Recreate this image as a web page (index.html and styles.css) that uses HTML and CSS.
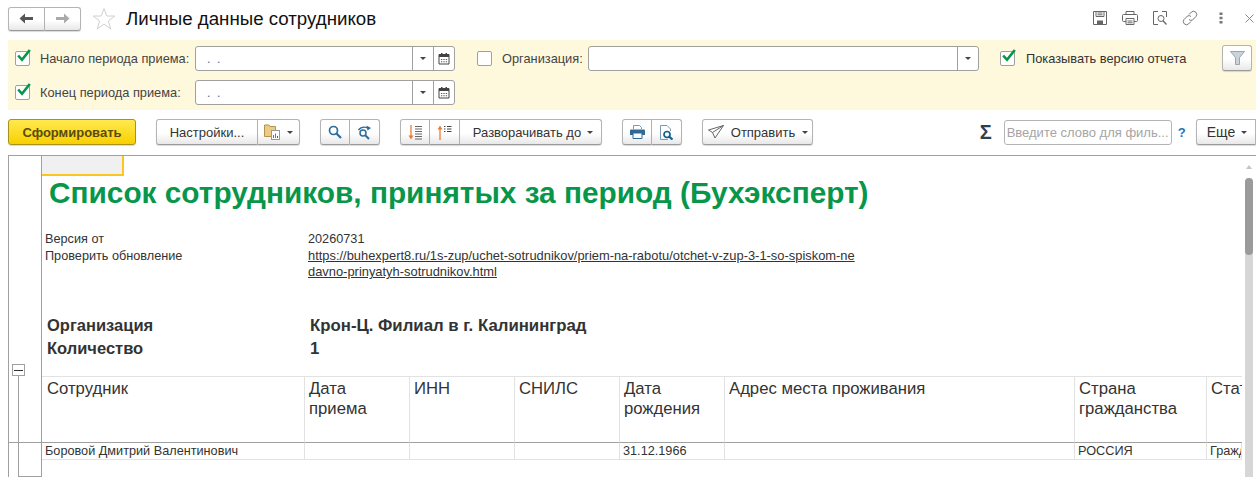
FILE: index.html
```html
<!DOCTYPE html>
<html lang="ru">
<head>
    <meta charset="UTF-8">
    <title>Личные данные сотрудников</title>
    <link rel="stylesheet" href="styles.css">
</head>
<body>
    <header class="top">
        <div class="group nav">
            <button class="btn nav-btn"><svg width="15" height="11" viewBox="0 0 15 11"><path d="M6 0.500V4H14V7H6V10.500L0.500 5.500Z" fill="#555"/></svg></button>
            <button class="btn nav-btn nav-next"><svg width="15" height="11" viewBox="0 0 15 11"><path d="M9 0.500V4H1V7H9V10.500L14.500 5.500Z" fill="#aaa"/></svg></button>
        </div>
        <svg class="star" width="24" height="24" viewBox="0 0 24 24"><path d="M12 1.500L14.800 9H22.800L16.400 14L18.800 22L12 17.200L5.200 22L7.600 14L1.200 9H9.200Z" fill="none" stroke="#d0d0d0"/></svg>
        <h1 class="title">Личные данные сотрудников</h1>
        <div class="top-icons">
            <svg width="16" height="16" viewBox="0 0 16 16"><path d="M1.500 1.500H14.500V14.500H1.500Z M4 1.500V6.500H12V1.500 M5.500 3H10.500 M5.500 4.800H10.500" fill="none" stroke="#666"/><rect x="5" y="10.500" width="6" height="4" fill="#666"/></svg>
            <svg width="16" height="16" viewBox="0 0 16 16"><path d="M4 4.500V1.500H12V4.500 M4 11.500H1.500Q0.500 11.500 0.500 10.500V5.500Q0.500 4.500 1.500 4.500H14.500Q15.500 4.500 15.500 5.500V10.500Q15.500 11.500 14.500 11.500H12 M4 8.500H12V14.500H4Z M5.500 11H10.500 M5.500 12.800H10.500" fill="none" stroke="#666"/></svg>
            <svg width="16" height="16" viewBox="0 0 16 16"><path d="M6 1.500H1.500V14.500H6 M10 1.500H14.500V7" fill="none" stroke="#666"/><circle cx="9" cy="8.500" r="3" fill="none" stroke="#666"/><path d="M11 10.800L14.500 14.500" stroke="#666" stroke-width="1.300"/></svg>
            <svg width="16" height="16" viewBox="0 0 16 16"><path d="M7 4.500L9.500 2Q11.500 0.300 13.800 2.200Q15.700 4.500 14 6.500L10.500 10Q8.500 11 7 9.500 M9 11.500L6.500 14Q4.500 15.700 2.200 13.800Q0.300 11.500 2 9.500L5.500 6Q7.500 5 9 6.500" fill="none" stroke="#777"/></svg>
            <svg class="dots" width="4" height="12" viewBox="0 0 4 12"><path d="M0.500 0.500H3.500V3H0.500Z M0.500 4.700H3.500V7.200H0.500Z M0.500 9H3.500V11.500H0.500Z" fill="#777"/></svg>
            <svg class="close" width="9" height="9" viewBox="0 0 9 9"><path d="M0.500 0.500L8.500 8.500M8.500 0.500L0.500 8.500" stroke="#888"/></svg>
        </div>
    </header>

    <section class="filters">
        <div class="filter-col">
            <div class="filter-row">
                <span class="check"><svg width="14" height="13" viewBox="0 0 14 13"><path d="M1.200 6.500L5 10.800L12.800 1" fill="none" stroke="#079549" stroke-width="2.600"/></svg></span>
                <label class="lbl lbl-start">Начало периода приема:</label>
                <div class="field date-field"><span class="date-mask">.&nbsp;&nbsp;.</span><span class="cell cell-drop"><i class="caret"></i></span><span class="cell cell-cal"><svg width="12" height="13" viewBox="0 0 12 13"><path d="M1 2.500H11V12H1Z" fill="none" stroke="#444"/><path d="M1 2.500H11V5H1Z M3 1H4.500V3H3Z M7.500 1H9V3H7.500Z" fill="#444"/><path d="M3 7H4.300V8H3Z M5.400 7H6.700V8H5.400Z M7.800 7H9.100V8H7.800Z M3 9.300H4.300V10.300H3Z M5.400 9.300H6.700V10.300H5.400Z M7.800 9.300H9.100V10.300H7.800Z" fill="#555"/></svg></span></div>
            </div>
            <div class="filter-row">
                <span class="check"><svg width="14" height="13" viewBox="0 0 14 13"><path d="M1.200 6.500L5 10.800L12.800 1" fill="none" stroke="#079549" stroke-width="2.600"/></svg></span>
                <label class="lbl lbl-start">Конец периода приема:</label>
                <div class="field date-field"><span class="date-mask">.&nbsp;&nbsp;.</span><span class="cell cell-drop"><i class="caret"></i></span><span class="cell cell-cal"><svg width="12" height="13" viewBox="0 0 12 13"><path d="M1 2.500H11V12H1Z" fill="none" stroke="#444"/><path d="M1 2.500H11V5H1Z M3 1H4.500V3H3Z M7.500 1H9V3H7.500Z" fill="#444"/><path d="M3 7H4.300V8H3Z M5.400 7H6.700V8H5.400Z M7.800 7H9.100V8H7.800Z M3 9.300H4.300V10.300H3Z M5.400 9.300H6.700V10.300H5.400Z M7.800 9.300H9.100V10.300H7.800Z" fill="#555"/></svg></span></div>
            </div>
        </div>
        <div class="filter-row org">
            <span class="check"></span>
            <label class="lbl lbl-org">Организация:</label>
            <div class="field org-field"><span class="cell cell-drop"><i class="caret"></i></span></div>
        </div>
        <div class="filter-row version">
            <span class="check"><svg width="14" height="13" viewBox="0 0 14 13"><path d="M1.200 6.500L5 10.800L12.800 1" fill="none" stroke="#079549" stroke-width="2.600"/></svg></span>
            <label class="lbl lbl-version">Показывать версию отчета</label>
        </div>
        <button class="btn filter-btn"><svg width="15" height="14" viewBox="0 0 15 14"><path d="M0.500 0.500H14.500L9.500 6.500V13.500H5.500V6.500Z" fill="#c9d3da" stroke="#9aa5ad"/></svg></button>
    </section>

    <nav class="toolbar">
        <button class="btn btn-main">Сформировать</button>
        <div class="group settings">
            <button class="btn btn-settings">Настройки...</button>
            <button class="btn btn-variants"><svg width="16" height="16" viewBox="0 0 16 16"><path d="M0.500 1H5L6 2.500H11.500V12.500H0.500Z" fill="#eccb85" stroke="#b3914f"/><rect x="7.500" y="6.500" width="8" height="9" fill="#fff" stroke="#999"/><path d="M9 11H10V14H9Z" fill="#2b9b4e"/><path d="M11 9.500H12V14H11Z" fill="#d9503f"/><path d="M13 12H14V14H13Z" fill="#2b6c9e"/></svg><i class="caret"></i></button>
        </div>
        <div class="group search">
            <button class="btn btn-icon"><svg width="14" height="14" viewBox="0 0 14 14"><circle cx="5.500" cy="5.500" r="4" fill="none" stroke="#2b6c9e" stroke-width="1.700"/><path d="M8.500 8.500L13 13" stroke="#2b6c9e" stroke-width="2.200"/></svg></button>
            <button class="btn btn-icon"><svg width="15" height="15" viewBox="0 0 15 15"><circle cx="6" cy="8" r="3" fill="none" stroke="#2b6c9e" stroke-width="1.500"/><path d="M8.500 10.500L12 14" stroke="#2b6c9e" stroke-width="2"/><path d="M1.500 5Q5 0.500 11 3" fill="none" stroke="#2b6c9e" stroke-width="1.400"/><path d="M9.500 0.500L14 3L10.500 5.500Z" fill="#2b6c9e"/></svg></button>
        </div>
        <div class="group tree">
            <button class="btn btn-icon"><svg width="15" height="15" viewBox="0 0 15 15"><path d="M3 0V12" stroke="#ef7b30" stroke-width="1.300"/><path d="M0.500 10.500H5.500L3 14.500Z" fill="#ef7b30"/><path d="M7 1.500H14M7 4H14M7 6.500H14M7 9H14M7 11.500H14M7 14H14" stroke="#666"/></svg></button>
            <button class="btn btn-icon"><svg width="15" height="15" viewBox="0 0 15 15"><path d="M3 3V15" stroke="#ef7b30" stroke-width="1.300"/><path d="M0.500 4.500H5.500L3 0.500Z" fill="#ef7b30"/><path d="M7 1.500H8.500M10 1.500H14.500M7 4H8.500M10 4H14.500M7 6.500H8.500M10 6.500H14.500" stroke="#444"/></svg></button>
            <button class="btn btn-expand">Разворачивать до<i class="caret"></i></button>
        </div>
        <div class="group print">
            <button class="btn btn-icon"><svg width="15" height="14" viewBox="0 0 15 14"><path d="M3.500 4V0.500H9.500L11.500 2.500V4" fill="none" stroke="#7a99b3"/><path d="M0 5.500Q0 4.500 1 4.500H14Q15 4.500 15 5.500V10H0Z" fill="#2f6a96"/><path d="M3 8H12V13.500H3Z" fill="#fff" stroke="#2f6a96"/></svg></button>
            <button class="btn btn-icon"><svg width="15" height="15" viewBox="0 0 15 15"><path d="M9 14.500H1.500V0.500H8L11.500 4V6" fill="none" stroke="#7a99b3"/><circle cx="8" cy="9.500" r="3" fill="none" stroke="#0f5f8e" stroke-width="1.700"/><path d="M10 11.500L13.500 14.500" stroke="#0f5f8e" stroke-width="2.200"/></svg></button>
        </div>
        <button class="btn btn-send"><svg width="16" height="14" viewBox="0 0 16 14"><path d="M15.500 0.500L0.500 5L4.500 7.500L7 13Z M15.500 0.500L4.500 7.500" fill="none" stroke="#666"/></svg>Отправить<i class="caret"></i></button>
        <span class="sigma">Σ</span>
        <input class="search-input" placeholder="Введите слово для филь...">
        <span class="help">?</span>
        <button class="btn btn-more">Еще<i class="caret"></i></button>
    </nav>

    <main class="report">
        <div class="gutter">
            <div class="gutter-top">
                <span class="toggle"></span>
                <span class="stem"></span>
            </div>
            <div class="gutter-end"></div>
        </div>
        <div class="sheet">
            <div class="active-cell"></div>
            <h2 class="report-title">Список сотрудников, принятых за период (Бухэксперт)</h2>
            <div class="meta">
                <div class="meta-name">Версия от</div>
                <div class="meta-val">20260731</div>
                <div class="meta-name">Проверить обновление</div>
                <a class="meta-link">https://buhexpert8.ru/1s-zup/uchet-sotrudnikov/priem-na-rabotu/otchet-v-zup-3-1-so-spiskom-ne<br>davno-prinyatyh-sotrudnikov.html</a>
            </div>
            <div class="summary">
                <div class="sum-name">Организация</div>
                <div class="sum-val">Крон-Ц. Филиал в г. Калининград</div>
                <div class="sum-name">Количество</div>
                <div class="sum-val">1</div>
            </div>
            <div class="data">
                <div class="th th-first">Сотрудник</div>
                <div class="th">Дата приема</div>
                <div class="th">ИНН</div>
                <div class="th">СНИЛС</div>
                <div class="th">Дата рождения</div>
                <div class="th">Адрес места проживания</div>
                <div class="th">Страна гражданства</div>
                <div class="th th-cut">Статус</div>
                <div class="td">Боровой Дмитрий Валентинович</div>
                <div class="td"></div>
                <div class="td"></div>
                <div class="td"></div>
                <div class="td">31.12.1966</div>
                <div class="td"></div>
                <div class="td">РОССИЯ</div>
                <div class="td td-cut">Гражданин</div>
            </div>
        </div>
        <div class="scroll">
            <i class="scroll-up"></i>
            <div class="scroll-track"><div class="scroll-thumb"></div></div>
        </div>
    </main>
</body>
</html>
```

FILE: styles.css
```css
* {
    box-sizing: border-box;
}

html, body {
    height: 477px;
    overflow: hidden;
}

body {
    margin: 0;
    background-color: #fff;
    font-family: "Liberation Sans", Arial, sans-serif;
    font-size: 12.700px;
    color: #333;
}

button {
    font-family: inherit;
    font-size: 13px;
    color: #333;
}

/* buttons */
.btn {
    display: inline-flex;
    align-items: center;
    justify-content: center;
    height: 26px;
    padding: 0;
    border: 1px solid #b4b4b4;
    border-bottom-color: #9a9a9a;
    border-radius: 3px;
    background: linear-gradient(#fff 55%, #e8e8e8);
    box-shadow: 0 1px 1px rgba(0, 0, 0, 0.15);
}

.group {
    display: flex;
}

.group .btn {
    border-radius: 0;
    border-left-width: 0;
}

.group .btn:first-child {
    border-left-width: 1px;
    border-radius: 3px 0 0 3px;
}

.group .btn:last-child {
    border-radius: 0 3px 3px 0;
}

.caret {
    display: inline-block;
    width: 0;
    height: 0;
    border-left: 3px solid transparent;
    border-right: 3px solid transparent;
    border-top: 3px solid #444;
}

/* title bar */
.top {
    display: flex;
    align-items: center;
    height: 40px;
    padding: 0 8px;
}

.nav {
    margin-top: -3px;
}

.nav-btn {
    width: 37px;
    height: 24px;
}

.nav-next {
    width: 36px;
}

.star {
    margin: -3px 0 0 11px;
}

.title {
    margin: -2px 0 0 10px;
    font-size: 18.700px;
    font-weight: normal;
    color: #111;
}

.top-icons {
    display: flex;
    align-items: center;
    gap: 14px;
    margin-left: auto;
    margin-top: -4px;
    margin-right: -6px;
}

.dots {
    margin-left: 7px;
}

.close {
    margin-left: 8px;
}

/* filters */
.filters {
    display: flex;
    align-items: flex-start;
    height: 70px;
    margin-left: 8px;
    padding: 6px 4px 0 7px;
    background-color: #fef8dd;
}

.filter-col {
    display: flex;
    flex-direction: column;
    gap: 9px;
}

.filter-row {
    display: flex;
    align-items: center;
    height: 25px;
}

.check {
    display: flex;
    flex: none;
    width: 15px;
    height: 15px;
    border: 1px solid #a0a0a0;
    border-radius: 2px;
    background-color: #fff;
}

.check svg {
    flex: none;
    margin: -3px 0 0 1px;
}

.lbl {
    color: #444;
    font-size: 12.800px;
    white-space: nowrap;
}

.lbl-start {
    width: 155px;
    margin-left: 10px;
}

.field {
    display: flex;
    justify-content: flex-end;
    height: 25px;
    border: 1px solid #a0a0a0;
    border-radius: 3px;
    background-color: #fff;
}

.date-field {
    width: 260px;
}

.date-mask {
    margin-right: auto;
    padding: 5px 0 0 11px;
    color: #3a6ea5;
    font-size: 12px;
}

.cell {
    display: flex;
    align-items: center;
    justify-content: center;
    width: 21px;
    border-left: 1px solid #a0a0a0;
}

.org {
    margin-left: 22px;
}

.lbl-org {
    width: 86px;
    margin-left: 10px;
}

.org-field {
    width: 391px;
}

.version {
    margin-left: 21px;
}

.lbl-version {
    margin-left: 11px;
    color: #333;
}

.filter-btn {
    width: 30px;
    height: 26px;
    margin: -1px 0 0 auto;
}

/* toolbar */
.toolbar {
    display: flex;
    align-items: center;
    height: 26px;
    margin-top: 9px;
    padding-left: 8px;
}

.btn-main {
    width: 128px;
    border-color: #a8921c;
    background: linear-gradient(#ffe94f, #f8d000);
    font-weight: bold;
    font-size: 13px;
    color: #5a4a10;
}

.settings {
    margin-left: 20px;
}

.btn-settings {
    width: 102px;
}

.btn-variants {
    width: 42px;
    gap: 7px;
}

.btn-icon {
    width: 30px;
}

.search {
    margin-left: 20px;
}

.tree {
    margin-left: 20px;
}

.btn-expand {
    width: 142px;
    gap: 6px;
    padding-left: 5px;
}

.print {
    margin-left: 20px;
}

.btn-send {
    width: 111px;
    gap: 7px;
    padding-left: 1px;
    margin-left: 20px;
}

.sigma {
    margin-left: auto;
    color: #2e3f4d;
    font-size: 20px;
    font-weight: bold;
}

.search-input {
    width: 168px;
    height: 25px;
    margin-left: 12px;
    padding: 0 2px;
    border: 1px solid #b4b4b4;
    border-radius: 3px;
    font-family: inherit;
    font-size: 13px;
}

.search-input::placeholder {
    color: #a5a5a5;
}

.help {
    margin: 0 10.400px 0 6px;
    color: #1d76b8;
    font-size: 13px;
    font-weight: bold;
}

.btn-more {
    width: 60px;
    gap: 6px;
    padding-left: 2px;
    border-radius: 3px 0 0 3px;
    font-size: 14px;
}

/* report */
.report {
    display: flex;
    height: 322px;
    margin: 10px 0 0 8px;
    border-top: 1px solid #a0a0a0;
}

.gutter {
    display: flex;
    flex-direction: column;
    flex: none;
    width: 34px;
    border-left: 1px solid #a0a0a0;
    border-right: 1px solid #a0a0a0;
}

.gutter-top {
    display: flex;
    flex-direction: column;
    height: 287px;
    padding: 208px 0 0 3px;
    border-bottom: 1px solid #a0a0a0;
}

.toggle {
    flex: none;
    width: 13px;
    height: 12px;
    border: 1px solid #a0a0a0;
    background: linear-gradient(#333, #333) center / 9px 1px no-repeat;
}

.stem {
    flex: 1;
    margin-left: 6px;
    border-left: 1px solid #a0a0a0;
}

.gutter-end {
    height: 34px;
    margin-left: 9px;
    border-left: 1px solid #a0a0a0;
    border-bottom: 1px solid #a0a0a0;
}

.sheet {
    flex: none;
    width: 1200px;
    overflow: hidden;
}

.active-cell {
    width: 82px;
    height: 20px;
    border-right: 2px solid #fcc520;
    border-bottom: 2px solid #fcc520;
    background-color: #f0f0f0;
}

.report-title {
    margin: -1px 0 0 7px;
    color: #07964a;
    font-size: 29.800px;
    line-height: 36px;
    white-space: nowrap;
}

.meta {
    display: grid;
    grid-template-columns: 266px 1fr;
    margin-top: 20px;
    line-height: 16.500px;
}

.meta-name {
    padding-left: 3px;
}

.meta-link {
    font-size: 12.900px;
    text-decoration: underline;
}

.summary {
    display: grid;
    grid-template-columns: 268px 1fr;
    grid-auto-rows: 23px;
    margin-top: 33px;
    font-size: 16.500px;
    font-weight: bold;
    line-height: 23px;
}

.sum-name {
    padding-left: 5px;
}

.sum-val {
    font-size: 16.800px;
}

.data {
    display: grid;
    grid-template-columns: 263px 105px 105px 105px 105px 350px 132px 35px;
    grid-template-rows: 66px 17px;
    margin-top: 16px;
    border-top: 1px solid #e2e2e2;
}

.th {
    padding: 2px 4px;
    border-right: 1px solid #e2e2e2;
    border-bottom: 1px solid #a0a0a0;
    font-size: 16.700px;
    line-height: 20px;
}

.th-first {
    padding-left: 5px;
}

.th-cut, .td-cut {
    overflow: hidden;
    white-space: nowrap;
    border-right: 0;
}

.th-cut {
    padding-right: 0;
}

.td {
    padding: 0 3px;
    border-right: 1px solid #e2e2e2;
    border-bottom: 1px solid #e2e2e2;
    line-height: 16px;
    white-space: nowrap;
}

.td-cut {
    padding-right: 0;
}

.scroll {
    display: flex;
    flex-direction: column;
    align-items: center;
    flex: none;
    width: 8px;
    margin-left: 3px;
    padding-top: 9px;
}

.scroll-up {
    flex: none;
    width: 0;
    height: 0;
    margin-bottom: 9px;
    border-left: 3px solid transparent;
    border-right: 3px solid transparent;
    border-bottom: 4px solid #c4c4c4;
}

.scroll-track {
    flex: 1;
    width: 8px;
    border-radius: 4px 4px 0 0;
    background-color: #d6d6d6;
}

.scroll-thumb {
    height: 77px;
    border-radius: 4px;
    background-color: #9b9b9b;
}
```
